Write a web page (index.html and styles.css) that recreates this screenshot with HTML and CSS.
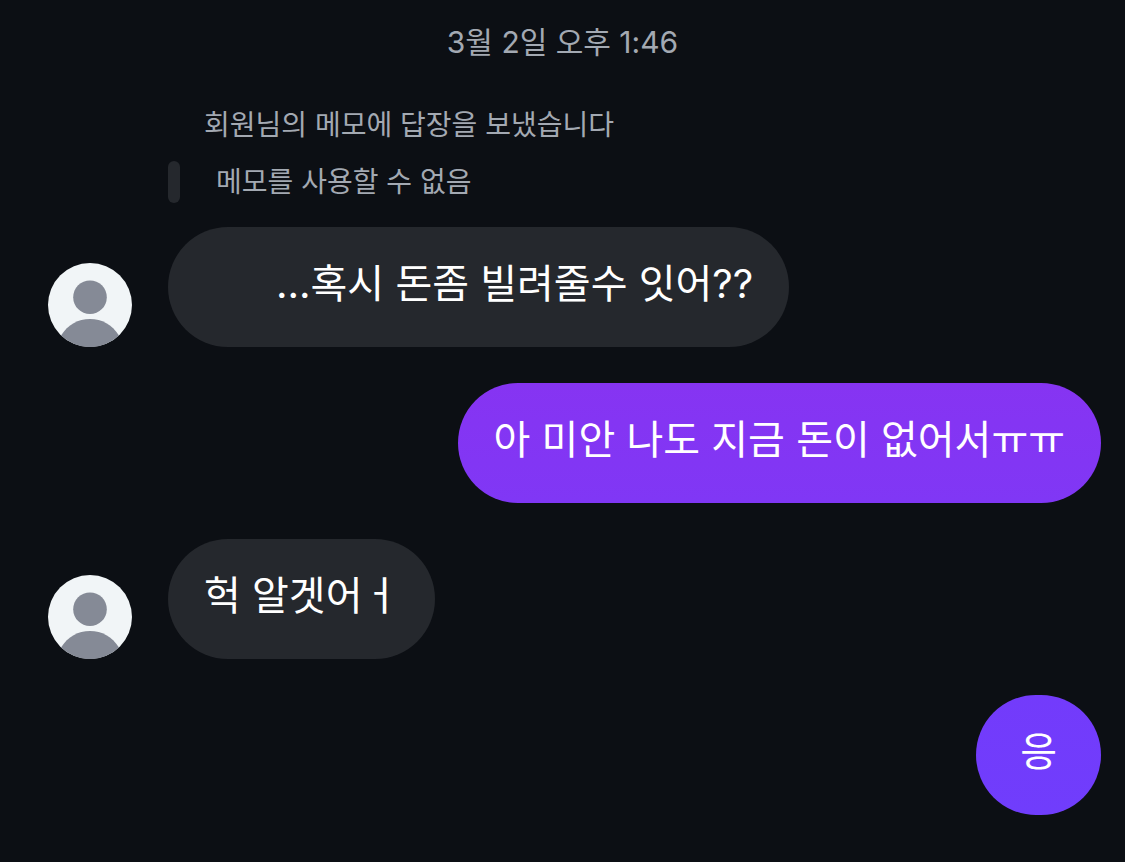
FILE: index.html
```html
<!DOCTYPE html>
<html lang="ko">
<head>
<meta charset="utf-8">
<meta name="viewport" content="width=device-width, initial-scale=1">
<title>대화</title>
<link rel="stylesheet" href="styles.css">
</head>
<body>
<svg class="defs" aria-hidden="true">
  <symbol id="person" viewBox="0 0 84 84">
    <circle cx="42" cy="42" r="42" fill="#f1f5f7"/>
    <circle cx="42" cy="34.200" r="16.800" fill="#858a96"/>
    <path d="M13 72.500C20 61.500 30 56 42 56S64 61.500 71 72.500A42 42 0 0 1 13 72.500Z" fill="#858a96"/>
  </symbol>
</svg>
<main class="chat">
  <time class="date">3월 2일 오후 1:46</time>
  <section class="reply">
    <p class="reply-label">회원님의 메모에 답장을 보냈습니다</p>
    <p class="reply-note">메모를 사용할 수 없음</p>
  </section>
  <div class="row received">
    <svg class="avatar" role="img" aria-label="프로필 사진"><use href="#person"/></svg>
    <p class="bubble redacted">...혹시 돈좀 빌려줄수 잇어??</p>
  </div>
  <div class="row sent">
    <p class="bubble upper">아 미안 나도 지금 돈이 없어서ㅠㅠ</p>
  </div>
  <div class="row received">
    <svg class="avatar" role="img" aria-label="프로필 사진"><use href="#person"/></svg>
    <p class="bubble">헉 알겟어ㅓ</p>
  </div>
  <div class="row sent">
    <p class="bubble lower">응</p>
  </div>
</main>
</body>
</html>
```
FILE: styles.css
```css
* { box-sizing: border-box; }
body {
  margin: 0;
  background: #0c0f14;
  color: #fff;
  font-family: Inter, "Noto Sans CJK KR", sans-serif;
}
p { margin: 0; }
.defs { position: absolute; width: 0; height: 0; }
.chat {
  display: flex;
  flex-direction: column;
  gap: 36px;
  padding: 24px 24px 47px 48px;
}
.date {
  align-self: center;
  margin-right: 24px;
  color: #a3a9b2;
  font-size: 30px;
  line-height: 36px;
}
.reply {
  margin: 8px 0 -12px 120px;
  color: #a3a9b2;
  font-size: 28px;
  line-height: 42px;
}
.reply-label { padding-left: 36px; }
.reply-note {
  position: relative;
  margin-top: 15px;
  padding-left: 48px;
}
.reply-note::before {
  content: "";
  position: absolute;
  inset: 0 auto 0 0;
  width: 12px;
  border-radius: 6px;
  background: #25282d;
}
.row { display: flex; align-items: flex-end; gap: 36px; }
.sent { justify-content: flex-end; }
.avatar { flex: none; width: 84px; height: 84px; }
.bubble {
  padding: 30px 36px 36px;
  border-radius: 60px;
  background: #25282d;
  font-size: 40px;
  line-height: 54px;
}
.redacted { padding-left: 108px; }
.upper { background: linear-gradient(#8634f2, #8037f5); }
.lower { padding-left: 44px; padding-right: 44px; background: linear-gradient(#733bfb, #703dfc); }
```
